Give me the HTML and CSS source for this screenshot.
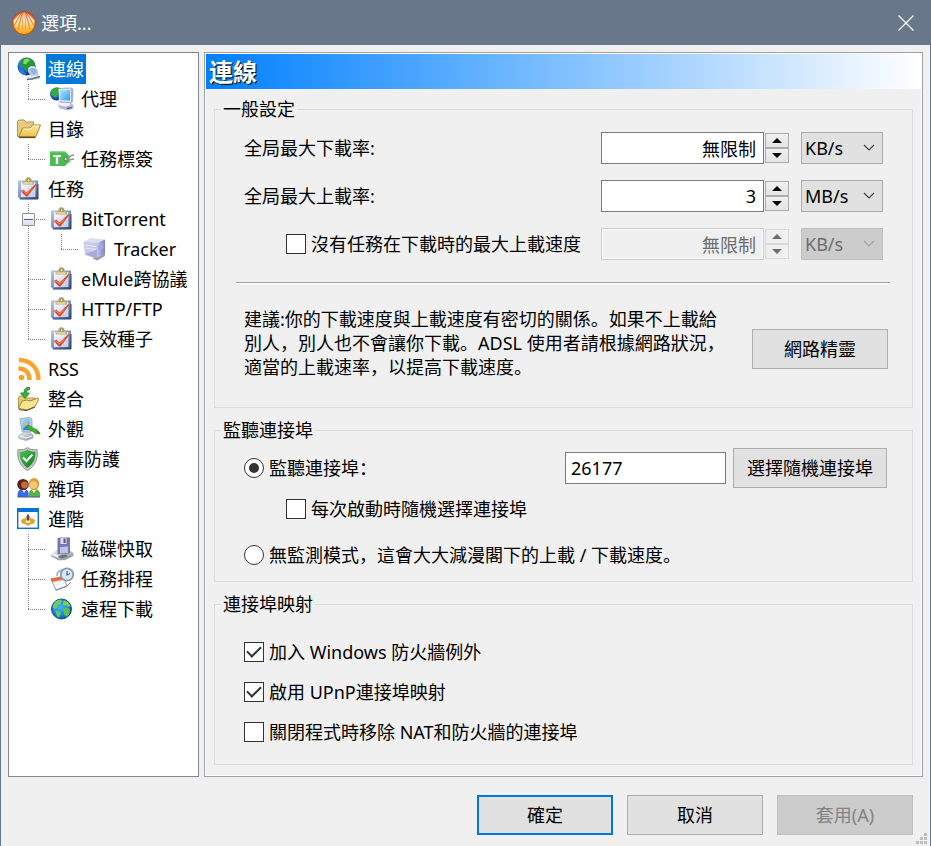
FILE: index.html
```html
<!DOCTYPE html>
<html lang="zh">
<head>
    <meta charset="UTF-8">
    <meta name="viewport" content="width=device-width, initial-scale=1.0">
    <title>選項...</title>
    <link rel="stylesheet" href="styles.css">
</head>
<body>

    <!-- Shared icons -->
    <svg class="sprite" aria-hidden="true">
        <defs>
            <linearGradient id="g-logo" x1="0" y1="0" x2="0" y2="1">
                <stop offset="0" stop-color="#d9531a"/>
                <stop offset="0.5" stop-color="#f58414"/>
                <stop offset="1" stop-color="#ffb81c"/>
            </linearGradient>
            <linearGradient id="g-ray" x1="0" y1="0" x2="0" y2="1">
                <stop offset="0" stop-color="#ffffff"/>
                <stop offset="0.5" stop-color="#ffe9c4"/>
                <stop offset="1" stop-color="#ffc640" stop-opacity="0.400"/>
            </linearGradient>
            <radialGradient id="g-sea" cx="0.35" cy="0.3" r="0.8">
                <stop offset="0" stop-color="#4fa3ee"/>
                <stop offset="0.5" stop-color="#1c62cf"/>
                <stop offset="1" stop-color="#0a2c86"/>
            </radialGradient>
            <radialGradient id="g-world" cx="0.45" cy="0.4" r="0.6">
                <stop offset="0" stop-color="#3fb4f5"/>
                <stop offset="0.7" stop-color="#1b7fe0"/>
                <stop offset="1" stop-color="#0b4cab"/>
            </radialGradient>
            <linearGradient id="g-screen" x1="0" y1="0" x2="1" y2="1">
                <stop offset="0" stop-color="#a5e2ff"/>
                <stop offset="0.5" stop-color="#6cc6f8"/>
                <stop offset="1" stop-color="#3a95e6"/>
            </linearGradient>
            <linearGradient id="g-folder" x1="0" y1="0" x2="0" y2="1">
                <stop offset="0" stop-color="#ffe795"/>
                <stop offset="1" stop-color="#f0c04c"/>
            </linearGradient>
            <linearGradient id="g-clip" x1="0" y1="0" x2="1" y2="1">
                <stop offset="0" stop-color="#b9c8ea"/>
                <stop offset="0.5" stop-color="#7d93c6"/>
                <stop offset="1" stop-color="#2e4779"/>
            </linearGradient>
            <linearGradient id="g-paper" x1="0" y1="0" x2="1" y2="1">
                <stop offset="0" stop-color="#ffffff"/>
                <stop offset="1" stop-color="#bcc8e6"/>
            </linearGradient>
            <linearGradient id="g-metal" x1="0" y1="0" x2="1" y2="1">
                <stop offset="0" stop-color="#f4f6fb"/>
                <stop offset="1" stop-color="#8a8fa0"/>
            </linearGradient>
            <linearGradient id="g-tower" x1="0" y1="0" x2="1" y2="0">
                <stop offset="0" stop-color="#c3c4ea"/>
                <stop offset="1" stop-color="#7f80c4"/>
            </linearGradient>
            <linearGradient id="g-shield" x1="0" y1="0" x2="1" y2="1">
                <stop offset="0" stop-color="#52c257"/>
                <stop offset="1" stop-color="#0b7a20"/>
            </linearGradient>
        </defs>

        <symbol id="i-globe-link" viewBox="0 0 24 24">
            <circle cx="9.500" cy="9.500" r="9" fill="url(#g-sea)"/>
            <path d="M5 2C8 .2 12 .2 15 2.500L18 6l.5 4-2 1-3-2-2 2-2 4-2-2-1-3-3-1z" fill="#239a35"/>
            <path d="M7 2.500l4-1 2 2-3 2-1 2-3-1z" fill="#86dc66"/>
            <path d="M2 12l4 1 3 4-2 1c-3-1-4.500-3-5-6z" fill="#2a7fe0"/>
            <path d="M11 11l3-2 4 .5 3 4 .5 5 1.500 1.500-1 2-11 1-1-2 4-2-3-4z" fill="#bccbe2"/>
            <path d="M13 12l3-1.500 3 2.500.5 3-3 1.500-2-2z" fill="#8fb2e0"/>
            <path d="M12 11.500l3-1.500 3 .5" fill="none" stroke="#eef4fd"/>
            <path d="M10 22.500l5-.5 8-2.500" fill="none" stroke="#6b7487" stroke-width="1.500"/>
            <path d="M12 20.500l8-2" stroke="#f3f6fb" stroke-width="1.200"/>
        </symbol>

        <symbol id="i-proxy" viewBox="0 0 24 24">
            <circle cx="6.500" cy="7" r="6.500" fill="url(#g-sea)"/>
            <path d="M2 3C5-.5 9 0 11 2L8 6 7 10 4 10 1 8z" fill="#35aa34"/>
            <path d="M9.500 1L21 .5l2.500 1.500-.5 13-2 1.500-12-1z" fill="#aab0d4"/>
            <path d="M8.500 2L21 1.500V15L9 14.500z" fill="#d9e4f5"/>
            <path d="M10 3.500l10-.5v10.500l-9.500-.5z" fill="url(#g-screen)"/>
            <path d="M7.500 18l5-2h8l3 2v3.500L18 23.500l-8-2z" fill="#b5b9d6"/>
            <path d="M7.500 18l5-2h7l1 2-5 1.500z" fill="#f0f1fa"/>
            <path d="M17 21.500l5-1" stroke="#5c6180" stroke-width="1.500"/>
        </symbol>

        <symbol id="i-folder" viewBox="0 0 24 24">
            <path d="M.5 19.500V4.500L2 3h5l2 2h7.500v5L6 20z" fill="#eacb7e" stroke="#a9955f"/>
            <path d="M2 19.500L5.500 11H13l2.500-3h8L19 19.500z" fill="url(#g-folder)" stroke="#a58740"/>
            <path d="M2 20.500h16.500" stroke="#59491f" stroke-width="1.200"/>
            <path d="M6.500 12h7L16 9h6" fill="none" stroke="#fff3c0"/>
        </symbol>

        <symbol id="i-tag" viewBox="0 0 24 24">
            <path d="M0 4.500h15l4.500 4.500v5.500L15 19H0z" fill="#4dbb52"/>
            <path d="M0 5h15" stroke="#71d375"/>
            <path d="M3 8h8v2H8.200v7H5.800v-7H3z" fill="#fff"/>
            <circle cx="16" cy="12" r="2" fill="#f4f6f4" stroke="#2c8a34"/>
            <path d="M16 12c3 0 3-4 8-4M16 12c3 0 4 1 8 0" fill="none" stroke="#8b918c" stroke-width="1.500"/>
            <path d="M20 12v4" stroke="#a2a8a3"/>
        </symbol>

        <symbol id="i-task" viewBox="0 0 24 24">
            <path d="M1 3.500h20V22H3l-2-2z" fill="url(#g-clip)"/>
            <path d="M4 5h14.500v15H4z" fill="url(#g-paper)"/>
            <path d="M3 22h18V7" fill="none" stroke="#31466f"/>
            <path d="M5.500 7.500V5L8 4l1-3 2-1 3 1 1 3 2 1v2.500z" fill="#b9ad7c"/>
            <path d="M6.500 6h9" stroke="#efe1a0" stroke-width="1.500"/>
            <circle cx="11.500" cy="3.200" r="1.500" fill="#f8f1c8" stroke="#817343" stroke-width="0.800"/>
            <path d="M3.500 14l3-1.500 3 3 7-6.500 2-2.500.5 2-8.500 11H9z" fill="#de4c2a"/>
            <path d="M4.500 14.500l2-.5 3 3 5-5" fill="none" stroke="#f58d6c"/>
        </symbol>

        <symbol id="i-tower" viewBox="0 0 24 24">
            <path d="M.5 4.500L8 1l14 1.500-8 3.500z" fill="#dcddf3"/>
            <path d="M.5 4.500L14 6v16L2 18z" fill="#c9cae8"/>
            <path d="M14 6l8-3.500V17l-8 5z" fill="url(#g-tower)"/>
            <path d="M2 8l11 1.500M2 11l11 1.500" stroke="#e8e9f8"/>
            <path d="M2 17c3-2 8-1 12-5v9.500z" fill="#a9abd6"/>
            <path d="M9 21l5 2.500 8-4.500-.5-2-7.500 4z" fill="#9b9ba6"/>
            <path d="M15.500 9l5-2v4l-5 2z" fill="#a5a7dc"/>
        </symbol>

        <symbol id="i-rss" viewBox="0 0 24 24">
            <circle cx="4.500" cy="20.500" r="2.800" fill="#fba12a"/>
            <path d="M1.500 11.500c7 0 11 4.500 11 11.500" fill="none" stroke="#fca02c" stroke-width="4.500"/>
            <path d="M2 3c11.500 0 19.500 8 19.500 20" fill="none" stroke="#fda42f" stroke-width="4.500"/>
        </symbol>

        <symbol id="i-import" viewBox="0 0 24 24">
            <path d="M1.500 21V10.500l1-1.500h5l1 2h9.500v3L16 21z" fill="#eacc6d" stroke="#b09a50"/>
            <path d="M1.500 21.500L5 14l5-1 3 1 8-3 .5 2-4 7-7 3z" fill="#fbe58c" stroke="#9d8541"/>
            <path d="M2 22.500l7 1 9-3.500" stroke="#66552a" fill="none" stroke-width="1.200"/>
            <path d="M12.500 0C8 .5 7 3 7 6H3.500L8 11.500 12.500 6h-3c0-2 .5-3 3-3.500z" fill="#3fae3a" stroke="#1a8420" stroke-width="0.800"/>
        </symbol>

        <symbol id="i-look" viewBox="0 0 24 24">
            <path d="M3 1.500L12.500.5 15 2v12l-4 1.500-6-1z" fill="#c3cfe8" stroke="#8f9fc4" stroke-width="0.800"/>
            <path d="M4.500 2.500l8-.5.5 11-7 .5z" fill="url(#g-screen)"/>
            <circle cx="9" cy="6.500" r="2" fill="#e6b660"/>
            <path d="M6 13c0-5 6.500-5 6.500 0z" fill="#3f83d6"/>
            <path d="M1.500 19l6-4h5l3.500 3v3l-7 2.500-7-2z" fill="url(#g-metal)" stroke="#a4abc0" stroke-width="0.800"/>
            <path d="M3 19l6 2 6-2" fill="none" stroke="#fff"/>
            <path d="M10 8.500c3 0 5 1 7 3l3 1 3 4-4 .5-4-3-5-2z" fill="#46ad34" stroke="#2b8623" stroke-width="0.600"/>
            <path d="M20 14l3 3" stroke="#7a5a33" stroke-width="1.500"/>
        </symbol>

        <symbol id="i-shield" viewBox="0 0 24 24">
            <path d="M10.500.5c2 2 6 2.500 9.500 2 1.500 9-2 17-9.500 21C3.500 20-.5 12 1 2.500 4.500 3 8.500 2.500 10.500.5z" fill="#c3cbc4" stroke="#7b857d" stroke-width="0.800"/>
            <path d="M10.500 2.800c2 1.500 5 2 8 2 0 7-2 12-8 16.200C5 17 2.500 12 2.500 4.800c3 0 6-.5 8-2z" fill="url(#g-shield)"/>
            <path d="M6 10.500l3.500 3.500 6-6.500" fill="none" stroke="#fff" stroke-width="2"/>
        </symbol>

        <symbol id="i-users" viewBox="0 0 24 24">
            <path d="M.5 20c-.5-6 2-8 6-8s6 3 5 8z" fill="#3a6ae6"/>
            <path d="M12 20c-1-6 2-8 5-8 5 0 7 3 6 8z" fill="#5dae48"/>
            <ellipse cx="6" cy="7.500" rx="5.800" ry="5.500" fill="#56241a"/>
            <circle cx="7.500" cy="8" r="3.400" fill="#cb6a35"/>
            <ellipse cx="17" cy="7" rx="5.300" ry="6" fill="#d9a03c"/>
            <circle cx="16.500" cy="8" r="3.800" fill="#f7c777"/>
            <path d="M5 13l2 3 2-3z" fill="#dce6ff"/>
            <path d="M15 13l2 3 2-3z" fill="#f0ffda"/>
            <path d="M.5 20h22.500" stroke="#44607a"/>
        </symbol>

        <symbol id="i-advanced" viewBox="0 0 24 24">
            <rect x="0.700" y="1.700" width="20.600" height="19.600" fill="#fafafa" stroke="#0f6fd1" stroke-width="1.400"/>
            <path d="M0 1h22v4H0z" fill="#0a6fd6"/>
            <path d="M4 14l1-2 3-.5L9 9h4l1 2.500 3 .5 1 2-1 2.500-3 .5-1.500 1.500h-3L8 17l-3-.5z" fill="#e0a136"/>
            <ellipse cx="11" cy="14.500" rx="2.500" ry="1.500" fill="#fff3cf"/>
            <path d="M11 7.500v6" stroke="#4b4f60" stroke-width="2"/>
        </symbol>

        <symbol id="i-disk" viewBox="0 0 24 24">
            <path d="M.5 18l6-5 11-1 6 4v3l-8 4-7 .5z" fill="url(#g-metal)"/>
            <path d="M7.500 1L10 .5h10V16l-4 1.500-8.500-.5z" fill="#7677ae"/>
            <path d="M10.500 1h6v6h-6z" fill="#dfe0ee"/>
            <path d="M10 10l8-.5v6.500l-8 .5z" fill="#c1c2de"/>
            <path d="M14.500 1.500V6" stroke="#50517f" stroke-width="2"/>
            <path d="M8 20c2-2.500 8-2.500 10-1l-5 3z" fill="#6c6f78"/>
            <path d="M1 19l8 3.500 14-4" fill="none" stroke="#9a9ca6"/>
            <path d="M3 17l5 2.500" stroke="#fbfbfd" stroke-width="1.500"/>
        </symbol>

        <symbol id="i-schedule" viewBox="0 0 24 24">
            <path d="M1 12l13-1 3 8.500L6 23.500z" fill="#eceef6" stroke="#a3a3af"/>
            <path d="M.5 11.500l12-2.500 2 3.500L2 15z" fill="#e06f44"/>
            <path d="M5 17l9-2M6 20l9-2.500" stroke="#fff" stroke-width="1.500"/>
            <path d="M7 9c0-4 2-6 6-6" fill="none" stroke="#b4bac6" stroke-width="2"/>
            <circle cx="17" cy="7.500" r="6.200" fill="#d7e7fa" stroke="#8e98aa" stroke-width="1.800"/>
            <path d="M17 4v4l3-1.500" fill="none" stroke="#4a6a9d" stroke-width="1.200"/>
            <path d="M6 23l11-4 4-4" fill="none" stroke="#8c8c97"/>
        </symbol>

        <symbol id="i-world" viewBox="0 0 24 24">
            <circle cx="11.500" cy="12" r="10" fill="url(#g-world)" stroke="#0f4f9f"/>
            <path d="M3 8l3-4 4-1.500 2 1.500-2 3-3 1 1 2-3 2-2-1z" fill="#6fcf55"/>
            <path d="M14 3.500l4 1.500 2.500 4-2.500 1-2-2-2 1-1.500-2z" fill="#76cf57"/>
            <path d="M13 11l4-.5 3 2-1 5-3 2.500-2-3z" fill="#5cbf49"/>
            <path d="M5 13l4 1 2 2.500-2 4-2-1z" fill="#67c74f"/>
        </symbol>
    </svg>

    <div class="window">
        <div class="title-bar">
            <svg class="logo" viewBox="0 0 26 26" aria-hidden="true">
                <circle cx="13" cy="13" r="11.500" fill="url(#g-logo)" stroke="#b9471c"/>
                <path d="M12.500 2.500L13.500 2.500 14.500 22H11.500zM11.800 2.500L10.800 22 7.300 21zM14.200 2.500L15.200 22 18.700 21zM10.800 3L6 20 3.300 16.500zM15.200 3L20 20 22.700 16.500zM9.500 3.300L3 15 2.500 10.500zM16.500 3.300L23 15 23.500 10.500z" fill="url(#g-ray)"/>
            </svg>
            <span class="title">選項...</span>
            <button class="close" aria-label="關閉">
                <svg viewBox="0 0 16 16"><path d="M.5.5l15 15M15.500.5l-15 15" fill="none" stroke="#fff" stroke-width="1.200"/></svg>
            </button>
        </div>

        <div class="main">
            <!-- Category tree -->
            <nav class="tree">
                <ul>
                    <li>
                        <a class="node selected" href="#"><svg class="icon"><use href="#i-globe-link"/></svg><span>連線</span></a>
                        <ul>
                            <li><a class="node" href="#"><svg class="icon"><use href="#i-proxy"/></svg><span>代理</span></a></li>
                        </ul>
                    </li>
                    <li>
                        <a class="node" href="#"><svg class="icon"><use href="#i-folder"/></svg><span>目錄</span></a>
                        <ul>
                            <li><a class="node" href="#"><svg class="icon"><use href="#i-tag"/></svg><span>任務標簽</span></a></li>
                        </ul>
                    </li>
                    <li>
                        <a class="node" href="#"><svg class="icon"><use href="#i-task"/></svg><span>任務</span></a>
                        <ul>
                            <li>
                                <button class="toggle" aria-label="收合"></button>
                                <a class="node" href="#"><svg class="icon"><use href="#i-task"/></svg><span>BitTorrent</span></a>
                                <ul>
                                    <li><a class="node" href="#"><svg class="icon"><use href="#i-tower"/></svg><span>Tracker</span></a></li>
                                </ul>
                            </li>
                            <li><a class="node" href="#"><svg class="icon"><use href="#i-task"/></svg><span>eMule跨協議</span></a></li>
                            <li><a class="node" href="#"><svg class="icon"><use href="#i-task"/></svg><span>HTTP/FTP</span></a></li>
                            <li><a class="node" href="#"><svg class="icon"><use href="#i-task"/></svg><span>長效種子</span></a></li>
                        </ul>
                    </li>
                    <li><a class="node" href="#"><svg class="icon"><use href="#i-rss"/></svg><span>RSS</span></a></li>
                    <li><a class="node" href="#"><svg class="icon"><use href="#i-import"/></svg><span>整合</span></a></li>
                    <li><a class="node" href="#"><svg class="icon"><use href="#i-look"/></svg><span>外觀</span></a></li>
                    <li><a class="node" href="#"><svg class="icon"><use href="#i-shield"/></svg><span>病毒防護</span></a></li>
                    <li><a class="node" href="#"><svg class="icon"><use href="#i-users"/></svg><span>雜項</span></a></li>
                    <li>
                        <a class="node" href="#"><svg class="icon"><use href="#i-advanced"/></svg><span>進階</span></a>
                        <ul>
                            <li><a class="node" href="#"><svg class="icon"><use href="#i-disk"/></svg><span>磁碟快取</span></a></li>
                            <li><a class="node" href="#"><svg class="icon"><use href="#i-schedule"/></svg><span>任務排程</span></a></li>
                            <li><a class="node" href="#"><svg class="icon"><use href="#i-world"/></svg><span>遠程下載</span></a></li>
                        </ul>
                    </li>
                </ul>
            </nav>

            <!-- Connection page -->
            <div class="panel">
                <h1 class="banner">連線</h1>

                <fieldset class="group general">
                    <legend>一般設定</legend>
                    <div class="rates">
                        <div class="rate">
                            <label class="name" for="max-down">全局最大下載率:</label>
                            <input id="max-down" class="text-box" type="text" value="無限制">
                            <div class="spinner">
                                <button class="up" aria-label="增加"></button>
                                <button class="down" aria-label="減少"></button>
                            </div>
                            <div class="combo">
                                <select aria-label="下載率單位"><option>KB/s</option><option>MB/s</option></select>
                                <svg viewBox="0 0 12 8"><path d="M1 1l5 5 5-5" fill="none" stroke="currentColor" stroke-width="1.200"/></svg>
                            </div>
                        </div>
                        <div class="rate">
                            <label class="name" for="max-up">全局最大上載率:</label>
                            <input id="max-up" class="text-box" type="text" value="3">
                            <div class="spinner">
                                <button class="up" aria-label="增加"></button>
                                <button class="down" aria-label="減少"></button>
                            </div>
                            <div class="combo">
                                <select aria-label="上載率單位"><option>KB/s</option><option selected>MB/s</option></select>
                                <svg viewBox="0 0 12 8"><path d="M1 1l5 5 5-5" fill="none" stroke="currentColor" stroke-width="1.200"/></svg>
                            </div>
                        </div>
                        <div class="rate disabled">
                            <label class="name check nested"><input type="checkbox">沒有任務在下載時的最大上載速度</label>
                            <input class="text-box" type="text" value="無限制" aria-label="沒有任務在下載時的最大上載速度" disabled>
                            <div class="spinner">
                                <button class="up" aria-label="增加" disabled></button>
                                <button class="down" aria-label="減少" disabled></button>
                            </div>
                            <div class="combo">
                                <select aria-label="單位" disabled><option>KB/s</option></select>
                                <svg viewBox="0 0 12 8"><path d="M1 1l5 5 5-5" fill="none" stroke="currentColor" stroke-width="1.200"/></svg>
                            </div>
                        </div>
                    </div>
                    <hr>
                    <div class="advice">
                        <p>建議:你的下載速度與上載速度有密切的關係。如果不上載給別人，別人也不會讓你下載。ADSL 使用者請根據網路狀況，適當的上載速率，以提高下載速度。</p>
                        <button class="btn">網路精靈</button>
                    </div>
                </fieldset>

                <fieldset class="group listen">
                    <legend>監聽連接埠</legend>
                    <div class="port">
                        <label class="check"><input type="radio" name="mode" checked>監聽連接埠：</label>
                        <input class="text-box" type="text" value="26177" aria-label="監聽連接埠">
                        <button class="btn">選擇隨機連接埠</button>
                    </div>
                    <label class="check nested"><input type="checkbox">每次啟動時隨機選擇連接埠</label>
                    <label class="check passive"><input type="radio" name="mode">無監測模式，這會大大減漫閣下的上載 / 下載速度。</label>
                </fieldset>

                <fieldset class="group mapping">
                    <legend>連接埠映射</legend>
                    <label class="check"><input type="checkbox" checked>加入 Windows 防火牆例外</label>
                    <label class="check"><input type="checkbox" checked>啟用 UPnP連接埠映射</label>
                    <label class="check"><input type="checkbox">關閉程式時移除 NAT和防火牆的連接埠</label>
                </fieldset>
            </div>
        </div>

        <div class="footer">
            <button class="btn default">確定</button>
            <button class="btn">取消</button>
            <button class="btn" disabled>套用(A)</button>
        </div>

        <svg class="grip" viewBox="0 0 11 11" aria-hidden="true">
            <path d="M8 0h3v3H8zM4 4h3v3H4zM8 4h3v3H8zM0 8h3v3H0zM4 8h3v3H4zM8 8h3v3H8z" fill="#bfbfbf"/>
        </svg>
    </div>

</body>
</html>
```

FILE: styles.css
```css
* {
    box-sizing: border-box;
}

body {
    margin: 0;
    font-family: "Noto Sans", "Noto Sans CJK SC", sans-serif;
    font-size: 18px;
    line-height: 24px;
    color: #000;
    background-color: #f0f0f0;
}

button,
input,
select {
    font: inherit;
    color: inherit;
    margin: 0;
}

.sprite {
    position: absolute;
    width: 0;
    height: 0;
}

.window {
    position: relative;
    display: flex;
    flex-direction: column;
    min-height: 100vh;
    border: 1px solid #68778a;
    border-top: none;
}

/* Title bar */
.title-bar {
    display: flex;
    align-items: center;
    height: 45px;
    padding: 0 16px 0 10px;
    background-color: #68778a;
    color: #fff;
}

.logo {
    width: 26px;
    height: 26px;
}

.title {
    flex: 1;
    padding-left: 4px;
}

.close {
    display: flex;
    padding: 0;
    border: none;
    background: none;
}

.close svg {
    width: 16px;
    height: 16px;
}

.main {
    flex: 1;
    display: flex;
    gap: 5px;
    padding: 7px 7px 0;
}

/* Tree */
.tree {
    width: 191px;
    flex: none;
    padding: 1px 0 0 8px;
    border: 1px solid #828790;
    background-color: #fff;
}

.tree ul {
    list-style: none;
    margin: 0;
    padding: 0;
}

.tree ul ul {
    padding-left: 33px;
}

.tree li {
    position: relative;
}

.node {
    display: flex;
    align-items: center;
    gap: 5px;
    height: 30px;
    color: #000;
    text-decoration: none;
    white-space: nowrap;
}

.node span {
    padding: 0 2px;
    line-height: 30px;
}

.node.selected span {
    background-color: #0078d7;
    color: #fff;
}

.icon {
    flex: none;
    width: 24px;
    height: 24px;
}

/* dotted connector lines */
.tree ul ul > li::before {
    content: "";
    position: absolute;
    left: -22px;
    top: 0;
    width: 1px;
    height: 100%;
    background: repeating-linear-gradient(#808080 0 1px, transparent 1px 2px);
}

.tree ul ul > li:last-child::before {
    height: 16px;
}

.tree ul ul > li::after {
    content: "";
    position: absolute;
    left: -22px;
    top: 15px;
    width: 17px;
    height: 1px;
    background: repeating-linear-gradient(to right, #808080 0 1px, transparent 1px 2px);
}

.toggle {
    position: absolute;
    z-index: 1;
    left: -28px;
    top: 9px;
    width: 13px;
    height: 13px;
    padding: 0;
    border: 1px solid #919191;
    border-radius: 1px;
    background: linear-gradient(#3a5fae, #3a5fae) center / 9px 1px no-repeat, linear-gradient(#fff, #dedede);
}

/* Page */
.panel {
    flex: 1;
    min-width: 0;
    border: 1px solid #a0a0a8;
    padding: 1px;
    background: #f0f0f0;
    box-shadow: inset 0 0 0 1px #fff;
}

.banner {
    height: 35px;
    margin: 0 0 8px;
    padding-left: 3px;
    background: linear-gradient(to right, #0080ff, #fff);
    color: #fff;
    font-size: 24px;
    font-weight: bold;
    line-height: 36px;
    text-shadow: 1px 1px 1px #000;
}

.group {
    min-width: 0;
    margin: 0 8px 10px;
    padding: 0 24px 0 29px;
    border: 1px solid #dcdcdc;
}

.group legend {
    margin-left: -23px;
    padding: 0 2px;
}

.general {
    padding-top: 11px;
    padding-bottom: 28px;
}

.listen {
    padding-top: 6px;
    padding-bottom: 14px;
}

.mapping {
    display: flex;
    flex-direction: column;
    gap: 16px;
    padding-top: 24px;
    padding-bottom: 20px;
}

.text-box {
    height: 32px;
    padding: 0 5px;
    border: 1px solid #7a7a7a;
    border-radius: 0;
    background-color: #fff;
}

.rates {
    display: flex;
    flex-direction: column;
    gap: 16px;
    margin-right: 5px;
}

.rate {
    display: flex;
    align-items: center;
}

.rate .name {
    flex: 1;
}

.rate .text-box {
    width: 163px;
    padding: 0 7px;
    text-align: right;
}

.spinner {
    display: flex;
    flex-direction: column;
    margin: 0 12px 0 1px;
}

.spinner button {
    display: flex;
    align-items: center;
    justify-content: center;
    width: 24px;
    height: 15px;
    padding: 0;
    border: 1px solid #acacac;
    background: linear-gradient(#f0f0f0, #e5e5e5);
}

.spinner button::before {
    content: "";
    border: 5px solid transparent;
}

.spinner .up::before {
    border-top: none;
    border-bottom-color: #000;
}

.spinner .down::before {
    border-bottom: none;
    border-top-color: #000;
}

.combo {
    position: relative;
    width: 82px;
}

.combo select {
    display: block;
    appearance: none;
    width: 100%;
    height: 32px;
    padding: 0 3px;
    border: 1px solid #adadad;
    border-radius: 0;
    background-color: #e1e1e1;
}

.combo svg {
    position: absolute;
    right: 8px;
    top: 12px;
    width: 12px;
    height: 8px;
    color: #444;
    pointer-events: none;
}

.disabled .text-box {
    border-color: #ccc;
    background-color: #f0f0f0;
    box-shadow: inset 0 0 0 1px #fff;
    color: #6d6d6d;
}

.disabled .spinner button {
    border-color: #d9d9d9;
    background: #f0f0f0;
}

.disabled .up::before {
    border-bottom-color: #6d6d6d;
}

.disabled .down::before {
    border-top-color: #6d6d6d;
}

.disabled select {
    border-color: #bfbfbf;
    background-color: #ccc;
    color: #6d6d6d;
    opacity: 1;
}

.disabled .combo svg {
    color: #a0a0a0;
}

hr {
    height: 2px;
    margin: 22px -2px 23px -8px;
    border: none;
    border-top: 1px solid #a0a0a0;
    border-bottom: 1px solid #fff;
}

.advice {
    display: flex;
    align-items: center;
    gap: 20px;
}

.advice p {
    flex: 1;
    margin: 0;
}

.advice .btn {
    margin-top: 12px;
}

/* Tick boxes and radios */
.check {
    display: flex;
    align-items: center;
    gap: 5px;
}

.nested {
    padding-left: 42px;
}

.check input {
    appearance: none;
    display: flex;
    justify-content: center;
    align-items: center;
    flex: none;
    width: 20px;
    height: 20px;
    border: 1px solid #333;
    background-color: #fff;
}

.check input[type="radio"] {
    border-radius: 50%;
}

.check input[type="radio"]:checked::before {
    content: "";
    width: 10px;
    height: 10px;
    border-radius: 50%;
    background-color: #333;
}

.check input[type="checkbox"]:checked::before {
    content: "";
    width: 6px;
    height: 12px;
    margin-bottom: 4px;
    border: solid #333;
    border-width: 0 2px 2px 0;
    transform: rotate(45deg);
}

.port {
    display: flex;
    align-items: center;
    margin: 0 1px 9px 0;
}

.port .check {
    flex: 1;
}

.port .text-box {
    width: 161px;
    margin-right: 7px;
}

.port .btn {
    width: 154px;
}

.passive {
    margin-top: 22px;
}

/* Buttons */
.btn {
    width: 136px;
    height: 40px;
    flex: none;
    padding: 0;
    border: 1px solid #adadad;
    background-color: #e1e1e1;
}

.btn.default {
    border: 2px solid #0078d7;
}

.btn:disabled {
    border-color: #bfbfbf;
    background-color: #ccc;
    color: #838383;
}

.footer {
    display: flex;
    justify-content: flex-end;
    gap: 14px;
    padding: 18px 17px 11px;
}

.grip {
    position: absolute;
    right: 3px;
    bottom: 2px;
    width: 11px;
    height: 11px;
}
```
